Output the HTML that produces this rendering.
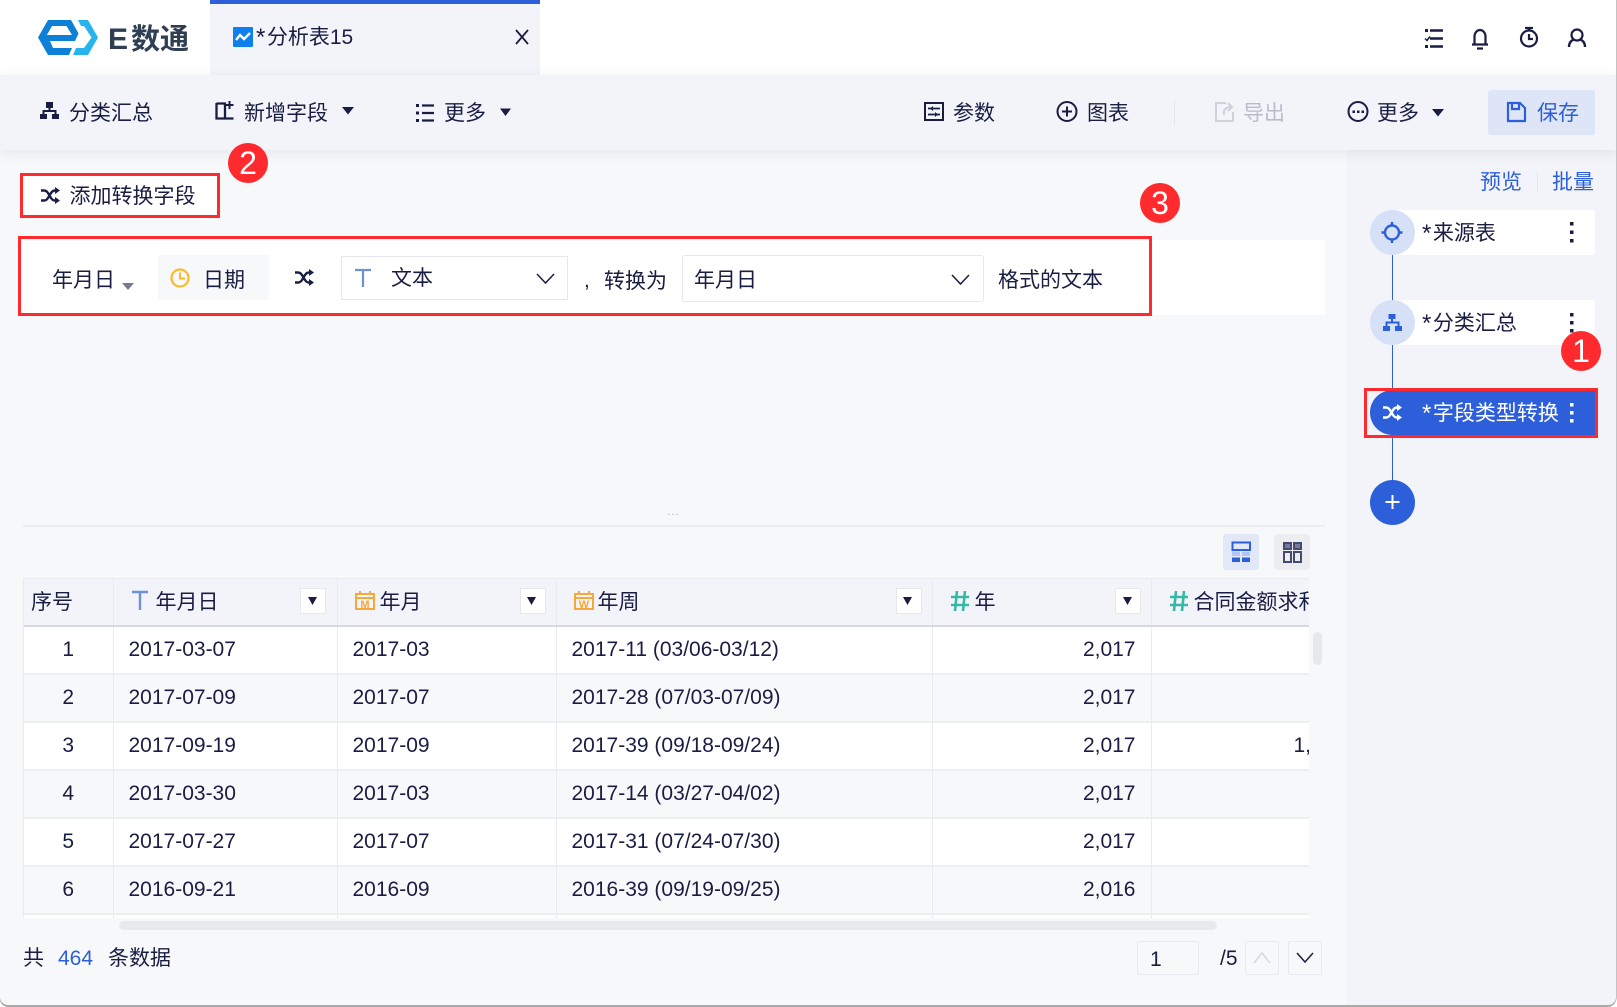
<!DOCTYPE html>
<html lang="zh"><head><meta charset="utf-8"><title>E数通</title>
<style>
*{box-sizing:border-box}
html,body{margin:0;padding:0;width:1617px;height:1007px;overflow:hidden;background:#fff}
body{font-family:"Liberation Sans","Noto Sans CJK SC",sans-serif;font-size:21px;color:#1a1d42;position:relative}
.a{position:absolute}
.t{position:absolute;line-height:30px;height:30px;white-space:nowrap}
.s{font-size:24px;line-height:0;margin-right:1.500px;vertical-align:-1px}
.blue{color:#2d5fdb}
.red{position:absolute;border:3px solid #ff2a2e}
.c{position:absolute;width:40px;height:40px;border-radius:50%;background:#ff2a2e;color:#fff;text-align:center;line-height:40px;font-size:32px}
svg{position:absolute;left:0;top:0}
table{border-collapse:collapse;table-layout:fixed;position:absolute;left:-1px;top:0;width:1286px}
td,th{padding:0;height:48px;border-right:1px solid #e9ebf0;border-bottom:2px solid #eceef2;font-weight:400;white-space:nowrap;text-align:left;padding-left:15px;line-height:30px}
th{height:47px;background:#f2f4f9;border-bottom:2px solid #d6d8dd;border-top:1px solid #e9ebf0;padding-top:3px}
tr.w td{background:#fff}tr.g td{background:#f7f8fa}
td.n{text-align:center;padding:0 0 0 1px}td.r{text-align:right;padding:0 15px 0 0}
.fb{position:absolute;width:26px;height:26px;background:#fff;border:1px solid #e6e8ee}
</style></head><body>
<div class="a" style="left:0;top:0;width:1616px;height:1005px;border-radius:0 0 8px 8px;background:#f7f8fa;overflow:hidden;box-shadow:0 2px 0 #a9a9a9,1px 0 0 #c4c4c4">
<div class="a" style="left:0;top:0;width:1616px;height:75px;background:#fff"></div>
<div class="a" style="left:210px;top:0;width:330px;height:75px;background:#f2f4f9;border-top:4px solid #2d5fdb"></div>
<div class="a" style="left:1347px;top:150px;width:269px;height:855px;background:#f2f4f9"></div>
<div class="a" style="left:0;top:75px;width:1616px;height:75px;background:#f2f4f9;box-shadow:0 3px 12px rgba(40,50,80,.09)"></div>
</div>

<span class="t" style="left:108px;top:21px;font-size:30px;font-weight:700;color:#2f3e52;line-height:38px;height:38px">E</span>
<span class="t" style="left:131px;top:21px;font-size:29px;font-weight:700;color:#2f3e52;line-height:38px;height:38px">数通</span>
<span class="t" style="left:256px;top:23px"><span class="s">*</span>分析表15</span>

<span class="t" style="left:69px;top:99px">分类汇总</span>
<span class="t" style="left:244px;top:99px">新增字段</span>
<span class="t" style="left:444px;top:99px">更多</span>
<span class="t" style="left:953px;top:99px">参数</span>
<span class="t" style="left:1087px;top:99px">图表</span>
<span class="t" style="left:1243px;top:99px;color:#b9bdc9">导出</span>
<span class="t" style="left:1377px;top:99px">更多</span>
<div class="a" style="left:1488px;top:90px;width:107px;height:45px;border-radius:3px;background:#dde5f6"></div>
<span class="t blue" style="left:1537px;top:99px">保存</span>
<div class="a" style="left:1174px;top:100px;width:1px;height:25px;background:#e4e6ec"></div>

<div class="a" style="left:20px;top:173px;width:200px;height:45px;background:#fff"></div>
<div class="red" style="left:20px;top:173px;width:200px;height:45px"></div>
<span class="t" style="left:69.500px;top:182px">添加转换字段</span>

<div class="a" style="left:20px;top:240px;width:1305px;height:75px;background:#fff"></div>
<div class="red" style="left:18px;top:236px;width:1134px;height:80px"></div>
<span class="t" style="left:52px;top:266px">年月日</span>
<div class="a" style="left:158px;top:255px;width:111px;height:45px;background:#f7f8fa"></div>
<span class="t" style="left:203px;top:266px">日期</span>
<div class="a" style="left:341px;top:256px;width:227px;height:44px;background:#fff;border:1.5px solid #e6e8ee"></div>
<span class="t" style="left:391px;top:264px">文本</span>
<span class="t" style="left:584px;top:266px">,</span>
<span class="t" style="left:604px;top:267px">转换为</span>
<div class="a" style="left:682px;top:255px;width:302px;height:47px;background:#fff;border:1.5px solid #e6e8ee;border-radius:3px"></div>
<span class="t" style="left:694px;top:266px">年月日</span>
<span class="t" style="left:998px;top:266px">格式的文本</span>

<span class="a" style="left:667px;top:504px;font-size:12px;line-height:14px;color:#b5b9c6;letter-spacing:1px">...</span>
<div class="a" style="left:23px;top:525px;width:1302px;height:2px;background:#eceef2"></div>
<div class="a" style="left:1223px;top:534px;width:36px;height:36px;border-radius:3px;background:#e1e8f7"></div>
<div class="a" style="left:1274px;top:534px;width:36px;height:36px;border-radius:3px;background:#ecedf1"></div>

<div class="a" style="left:23px;top:578px;width:1286px;height:340px;overflow:hidden;border-left:1px solid #e9ebf0">
<table><colgroup><col style="width:90px"><col style="width:224px"><col style="width:219px"><col style="width:376px"><col style="width:219px"><col style="width:158px"></colgroup>
<tr><th style="padding-left:8px">序号</th><th style="padding-left:42px">年月日</th><th style="padding-left:42px">年月</th><th style="padding-left:41px">年周</th><th style="padding-left:42px">年</th><th style="padding-left:42px;overflow:hidden">合同金额求和</th></tr>
<tr class="w"><td class="n">1</td><td>2017-03-07</td><td>2017-03</td><td>2017-11 (03/06-03/12)</td><td class="r">2,017</td><td></td></tr>
<tr class="g"><td class="n">2</td><td>2017-07-09</td><td>2017-07</td><td>2017-28 (07/03-07/09)</td><td class="r">2,017</td><td></td></tr>
<tr class="w"><td class="n">3</td><td>2017-09-19</td><td>2017-09</td><td>2017-39 (09/18-09/24)</td><td class="r">2,017</td><td style="padding-left:142px;overflow:hidden">1,033</td></tr>
<tr class="g"><td class="n">4</td><td>2017-03-30</td><td>2017-03</td><td>2017-14 (03/27-04/02)</td><td class="r">2,017</td><td></td></tr>
<tr class="w"><td class="n">5</td><td>2017-07-27</td><td>2017-07</td><td>2017-31 (07/24-07/30)</td><td class="r">2,017</td><td></td></tr>
<tr class="g"><td class="n">6</td><td>2016-09-21</td><td>2016-09</td><td>2016-39 (09/19-09/25)</td><td class="r">2,016</td><td></td></tr>
<tr class="w"><td class="n"></td><td></td><td></td><td></td><td></td><td></td></tr>
</table>
<div class="fb" style="left:276px;top:10px"></div>
<div class="fb" style="left:496px;top:10px"></div>
<div class="fb" style="left:872px;top:10px"></div>
<div class="fb" style="left:1091px;top:10px"></div>
</div>
<div class="a" style="left:1313px;top:632px;width:9px;height:33px;border-radius:5px;background:#e6e8ec"></div>
<div class="a" style="left:119px;top:921px;width:1098px;height:9px;border-radius:5px;background:#e8e9ec"></div>

<span class="t" style="left:23px;top:944px">共</span>
<span class="t blue" style="left:58px;top:944px">464</span>
<span class="t" style="left:108px;top:944px">条数据</span>
<div class="a" style="left:1137px;top:941px;width:62px;height:34px;border:1px solid #e8eaef;border-radius:2px"></div>
<span class="t" style="left:1150px;top:945px">1</span>
<span class="t" style="left:1220px;top:944px">/5</span>
<div class="a" style="left:1245px;top:941px;width:34px;height:34px;border:1px solid #e8eaef;border-radius:2px"></div>
<div class="a" style="left:1288px;top:941px;width:34px;height:34px;border:1px solid #e8eaef;border-radius:2px"></div>

<span class="t" style="left:1480px;top:168px;color:#2d5fdb">预览</span>
<span class="t" style="left:1552px;top:168px;color:#2d5fdb">批量</span>
<div class="a" style="left:1537px;top:172px;width:1px;height:20px;background:#e4e6ec"></div>

<div class="a" style="left:1391.5px;top:255px;width:1.5px;height:225px;background:#2d5fdb"></div>
<div class="a" style="left:1392px;top:210px;width:203px;height:45px;background:#fff;border-radius:0 3px 3px 0"></div>
<div class="a" style="left:1370px;top:210px;width:45px;height:45px;border-radius:50%;background:#d6e0f7"></div>
<span class="t" style="left:1422px;top:219px"><span class="s">*</span>来源表</span>
<div class="a" style="left:1392px;top:300px;width:203px;height:45px;background:#fff;border-radius:0 3px 3px 0"></div>
<div class="a" style="left:1370px;top:300px;width:45px;height:45px;border-radius:50%;background:#d6e0f7"></div>
<span class="t" style="left:1422px;top:309px"><span class="s">*</span>分类汇总</span>
<div class="a" style="left:1370px;top:390px;width:225px;height:45px;border-radius:23px 0 0 23px;background:#2d5fdb"></div>
<span class="t" style="left:1422px;top:399px;color:#fff"><span class="s">*</span>字段类型转换</span>
<div class="red" style="left:1364px;top:388px;width:234px;height:50px"></div>
<div class="a" style="left:1370px;top:480px;width:45px;height:45px;border-radius:50%;background:#2d5fdb"></div>

<svg width="1617" height="1007" viewBox="0 0 1617 1007" xmlns="http://www.w3.org/2000/svg" fill="none">
<defs>
<g id="hier"><rect x="6" y="0" width="7" height="6"/><rect x="0" y="12" width="7" height="5"/><rect x="12" y="12" width="7" height="5"/></g>
<path id="shuf" d="M0 3.500h3c2 0 3 1 4 2.500l3 5c1 1.500 2 2.500 4 2.500h1M0 13.500h3c2 0 3-1 4-2.500l3-5c1-1.500 2-2.500 4-2.500h1"/>
<path id="shufh" d="M14 0l5 3.500-5 3.500zM14 10l5 3.500-5 3.500z"/>
</defs>
<!-- logo -->
<path fill="#0d80d8" fill-rule="evenodd" d="M38 37.500 48 20H71L78.500 33.500 75 41H50L53 48H72L69 55H48ZM45.500 37.500 47 35H72L66.500 26H52Z"/>
<path fill="#27b4ec" d="M78 20H88L98 37.500 88 55H73L76 48H84L91.500 37.500 84 26H81Z"/>
<!-- tab icon -->
<rect x="233" y="27" width="20" height="20" rx="1" fill="#0f7ff0"/>
<path d="M236 40l4-5 4 4 6-6" stroke="#fff" stroke-width="2.400"/>
<path d="M516 30l12 14M528 30l-12 14" stroke="#1a1d42" stroke-width="1.800"/>
<!-- top right -->
<g stroke="#1a1d42" stroke-width="2.500"><path d="M1430 30.500h13M1430 38.500h13M1430 46.500h13"/><path d="M1425 38.500l2 2 3-4" stroke-width="1.500"/></g>
<rect x="1425" y="29" width="3" height="3" fill="#1a1d42"/><rect x="1425" y="45" width="3" height="3" fill="#1a1d42"/>
<path d="M1472 44.500h16M1474.500 44.500V36.500a5.500 6.500 0 0 1 11 0V44.500M1477 48.500h6" stroke="#1a1d42" stroke-width="2.200"/>
<circle cx="1529" cy="38.500" r="8" stroke="#1a1d42" stroke-width="2.200"/><path d="M1525 28h8M1529 28v3M1529 34v5h4" stroke="#1a1d42" stroke-width="2.200"/>
<circle cx="1577" cy="35" r="5.500" stroke="#1a1d42" stroke-width="2.200"/><path d="M1569 47c0-5 3-7 5-7.500M1585 47c0-5-3-7-5-7.500" stroke="#1a1d42" stroke-width="2.400"/>
<!-- toolbar -->
<g fill="#1a1d42"><use href="#hier" x="40" y="102"/></g><path d="M49.500 108v3M43.500 114v-3h12v3" stroke="#1a1d42" stroke-width="2"/>
<path d="M216.500 103v15.500h17M216.500 103.500h8.500v15" stroke="#1a1d42" stroke-width="2.300"/><path d="M229.500 101v8M225.500 105h8" stroke="#1a1d42" stroke-width="2"/>
<path fill="#1a1d42" d="M342 107h12l-6 7.500zM500 108.500h11l-5.500 7.500zM1432 109h12l-6 7.500z"/>
<g stroke="#1a1d42" stroke-width="2.300"><path d="M422 105.500h12M422 113h12M422 120.500h12"/></g>
<g fill="#1a1d42"><rect x="416" y="104" width="3" height="3"/><rect x="416" y="111.500" width="3" height="3"/><rect x="416" y="119" width="3" height="3"/></g>
<rect x="925" y="103" width="18" height="17" stroke="#1a1d42" stroke-width="2"/><path d="M928 108.500h12M928 114.500h12" stroke="#1a1d42" stroke-width="1.800"/><path fill="#1a1d42" d="M933 106l-3 2.500 3 2.500zM935 112l3 2.500-3 2.500z"/>
<circle cx="1067" cy="111.500" r="9.500" stroke="#1a1d42" stroke-width="2"/><path d="M1067 106.500v10M1062 111.500h10" stroke="#1a1d42" stroke-width="2"/>
<path d="M1226 103h-10v18h17v-9" stroke="#cfd2da" stroke-width="2"/><path d="M1224 115v-3c0-3 3-5 7-5M1228 103l4 4-4 4" stroke="#cfd2da" stroke-width="2"/>
<circle cx="1358" cy="111.500" r="9.500" stroke="#1a1d42" stroke-width="2"/><g fill="#1a1d42"><rect x="1352.500" y="110.500" width="2.500" height="2.500"/><rect x="1357" y="110.500" width="2.500" height="2.500"/><rect x="1361.500" y="110.500" width="2.500" height="2.500"/></g>
<path d="M1508 103h12l5 5v13h-17zM1512 103v6h7v-6" stroke="#2d5fdb" stroke-width="2.200"/>
<!-- convert -->
<g transform="translate(41 187)" stroke="#1a1d42" stroke-width="2.400"><use href="#shuf"/></g><use href="#shufh" x="41" y="187" fill="#1a1d42"/>
<path fill="#777b8e" d="M122 283h12l-6 7z"/>
<circle cx="180" cy="278" r="8.500" stroke="#fdb92a" stroke-width="2.200"/><path d="M180 272.500v6h5" stroke="#fdb92a" stroke-width="2"/>
<g transform="translate(295 269)" stroke="#1a1d42" stroke-width="2.400"><use href="#shuf"/></g><use href="#shufh" x="295" y="269" fill="#1a1d42"/>
<path d="M355 270h16M363 270v17" stroke="#6e8fd9" stroke-width="2.200"/>
<path d="M537 274l8.500 9 8.500-9M952 275l8.500 9 8.500-9" stroke="#1a1d42" stroke-width="1.500"/>
<!-- table icons -->
<path d="M132 592h16M140 592v18" stroke="#6e8fd9" stroke-width="2.400"/>
<g stroke="#f6a83c" stroke-width="2" fill="none"><path d="M356 594h18v15h-18zM356 598h18M360 591v4M370 591v4"/><path d="M575 594h18v15h-18zM575 598h18M579 591v4M589 591v4"/></g>
<text x="365" y="608" font-family="Liberation Sans" font-size="11" font-weight="700" fill="#f6a83c" text-anchor="middle">M</text>
<text x="584" y="608" font-family="Liberation Sans" font-size="11" font-weight="700" fill="#f6a83c" text-anchor="middle">W</text>
<g stroke="#36b8a8" stroke-width="2.600"><path d="M957 591l-2 20M965 591l-2 20M951 597h18M951 605h18"/><path d="M1176 591l-2 20M1184 591l-2 20M1170 597h18M1170 605h18"/></g>
<path fill="#1a1d42" d="M308 597h9l-4.500 8zM527 597h9l-4.500 8zM903 597h9l-4.500 8zM1123 597h9l-4.500 8z"/>
<!-- view icons -->
<rect x="1232.500" y="542.500" width="17.500" height="7.500" stroke="#2d5fdb" stroke-width="2"/>
<g fill="#b3c6f3"><rect x="1232" y="551.500" width="8" height="4.500"/><rect x="1242" y="551.500" width="8" height="4.500"/></g>
<g fill="#2d5fdb"><rect x="1232" y="557.500" width="8" height="4.500"/><rect x="1242" y="557.500" width="8" height="4.500"/></g>
<g fill="#777b97" stroke="#444a70" stroke-width="2"><rect x="1284" y="543" width="7" height="6"/><rect x="1294" y="543" width="7" height="6"/></g>
<g stroke="#444a70" stroke-width="2"><rect x="1284" y="552" width="7" height="10"/><rect x="1294" y="552" width="7" height="10"/></g>
<!-- pager -->
<path d="M1254 963l8-10 8 10" stroke="#d5d8df" stroke-width="1.500"/><path d="M1297 953l8 9 8-9" stroke="#1a1d42" stroke-width="1.500"/>
<!-- sidebar -->
<circle cx="1392" cy="232.500" r="7" stroke="#2d5fdb" stroke-width="2.400"/><path d="M1392 222v4M1392 239v4M1381.500 232.500h4M1398.500 232.500h4" stroke="#2d5fdb" stroke-width="2.400"/>
<g fill="#2d5fdb"><rect x="1388.500" y="314" width="7" height="5"/><rect x="1383" y="326" width="7" height="5"/><rect x="1395" y="326" width="7" height="5"/></g><path d="M1392 319v3M1386.500 327v-4.500h12V327" stroke="#2d5fdb" stroke-width="2"/>
<g transform="translate(1383 404)" stroke="#fff" stroke-width="2.400"><use href="#shuf"/></g><use href="#shufh" x="1383" y="404" fill="#fff"/>
<path d="M1392.500 495v14M1385.500 502h14" stroke="#fff" stroke-width="2"/>
<g fill="#1a1d42"><rect x="1570" y="222" width="3.500" height="3.500"/><rect x="1570" y="230.500" width="3.500" height="3.500"/><rect x="1570" y="239" width="3.500" height="3.500"/><rect x="1570" y="313" width="3.500" height="3.500"/><rect x="1570" y="321" width="3.500" height="3.500"/><rect x="1570" y="329" width="3.500" height="3.500"/></g>
<g fill="#fff"><rect x="1570" y="403" width="3.500" height="3.500"/><rect x="1570" y="411" width="3.500" height="3.500"/><rect x="1570" y="419" width="3.500" height="3.500"/></g>
</svg>
<div class="c" style="left:228px;top:143px">2</div>
<div class="c" style="left:1140px;top:183px">3</div>
<div class="c" style="left:1561px;top:331px">1</div>
</body></html>
